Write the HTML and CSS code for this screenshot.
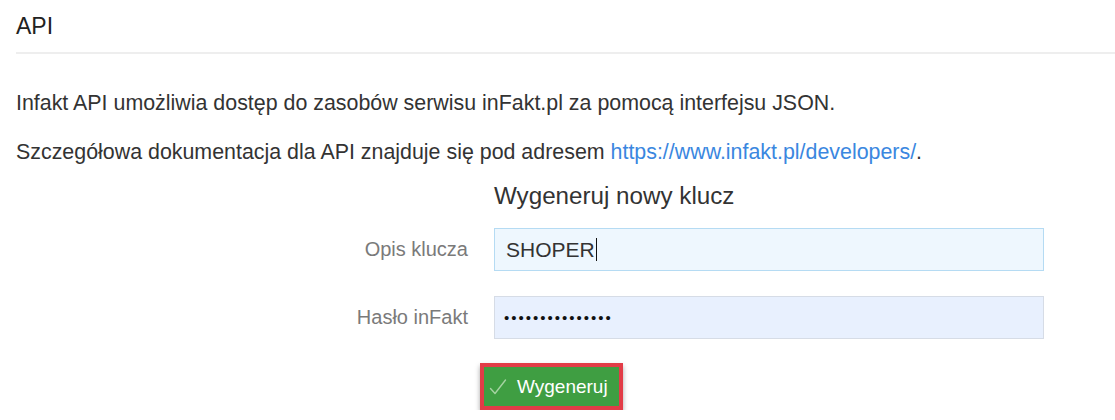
FILE: index.html
```html
<!DOCTYPE html>
<html lang="pl">
<head>
<meta charset="utf-8">
<title>API</title>
<link rel="stylesheet" href="styles.css">
</head>
<body>
<div class="page">
  <div class="page-header"><h3 class="title">API</h3></div>
  <p class="text">Infakt API umożliwia dostęp do zasobów serwisu inFakt.pl za pomocą interfejsu JSON.</p>
  <p class="text">Szczegółowa dokumentacja dla API znajduje się pod adresem <a class="link" href="#">https://www.infakt.pl/developers/</a>.</p>
  <form class="form">
    <div class="spacer"></div>
    <h4 class="form-title">Wygeneruj nowy klucz</h4>

    <label class="label">Opis klucza</label>
    <div class="input input-focus"><span class="value">SHOPER</span><span class="caret"></span></div>

    <label class="label">Hasło inFakt</label>
    <div class="input input-autofill"><span class="dots">•••••••••••••••</span></div>

    <div class="spacer"></div>
    <div class="actions">
      <div class="highlight">
        <button class="btn" type="button"><svg class="check" width="18" height="18" viewBox="0 0 18 18" aria-hidden="true"><path d="M1.5 10.5 L6 15.5 L16.5 2" fill="none" stroke="#a6d3a2" stroke-width="1.4" stroke-linecap="round" stroke-linejoin="round"/></svg>Wygeneruj</button>
      </div>
    </div>
  </form>
</div>
</body>
</html>
```
FILE: styles.css
```css
html, body {
  margin: 0;
  padding: 0;
  background: #fff;
}
body {
  font-family: "Liberation Sans", Arial, sans-serif;
  color: #333;
}
.page {
  padding-left: 16px;
}
.page-header {
  border-bottom: 2px solid #eeeeee;
  padding-top: 14px;
  padding-bottom: 14px;
  margin-bottom: 36px;
}
.title {
  margin: 0;
  font-size: 23px;
  font-weight: normal;
  line-height: 24px;
  color: #222;
}
.text {
  margin: 0 0 23px;
  font-size: 21.4px;
  line-height: 26px;
}
.link {
  color: #3a87e0;
  text-decoration: none;
}
.form {
  display: grid;
  grid-template-columns: 452px 550px;
  column-gap: 26px;
  row-gap: 25px;
  align-items: center;
  margin-top: -7px;
}
.form-title {
  margin: 0 0 -8px;
  font-size: 24.2px;
  font-weight: normal;
  line-height: 30px;
  color: #333;
}
.label {
  text-align: right;
  font-size: 20px;
  color: #7a7a7a;
}
.input {
  box-sizing: border-box;
  height: 43px;
  border: 1px solid #d4dbe4;
  padding: 0 11px;
  display: flex;
  align-items: center;
  font-size: 21px;
  color: #333;
}
.input-focus {
  background: #eef7fe;
  border-color: #b5dbf3;
}
.input-autofill {
  background: #e8f0fe;
  border-color: #d6dce6;
  padding-left: 9px;
}
.caret {
  display: inline-block;
  width: 1px;
  height: 23px;
  background: #111;
  margin-left: 1px;
}
.dots {
  font-size: 15px;
  letter-spacing: 2px;
  color: #111;
}
.actions {
  display: flex;
  margin-top: -1px;
}
.highlight {
  margin-left: -14px;
  border: 4px solid #e23c47;
  box-shadow: 0 3px 5px rgba(0,0,0,0.35);
  display: flex;
}
.btn {
  border: 0;
  margin: 0;
  background: #3f9e42;
  color: #fff;
  font-family: "Liberation Sans", Arial, sans-serif;
  font-size: 19px;
  height: 39px;
  padding: 0 11px 0 5px;
  display: flex;
  align-items: center;
}
.check {
  display: block;
  margin-right: 10px;
}
```
